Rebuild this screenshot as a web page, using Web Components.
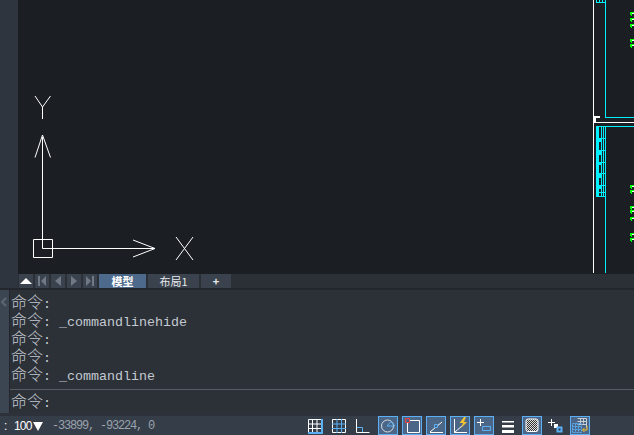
<!DOCTYPE html>
<html lang="zh">
<head>
<meta charset="utf-8">
<title>CAD</title>
<style>
    html, body { margin: 0; height: 100%; overflow: hidden; background: #2c3037; }
    body { display: grid; grid-template-rows: 274px 16px 123px 22px; height: 435px; width: 634px; }
</style>
</head>
<body>
<cad-viewport></cad-viewport>
<cad-tabs>
    <cad-tab nav><svg width="14" height="14" viewBox="0 0 14 14"><path d="M1 10 7 4l6 6z" fill="#fff"/></svg></cad-tab>
    <cad-tab nav><svg width="14" height="14" viewBox="0 0 14 14"><path d="M3 2h2v10H3zM11 2v10L6 7z" fill="#6f7884"/></svg></cad-tab>
    <cad-tab nav><svg width="14" height="14" viewBox="0 0 14 14"><path d="M10 2v10L4 7z" fill="#6f7884"/></svg></cad-tab>
    <cad-tab nav><svg width="14" height="14" viewBox="0 0 14 14"><path d="M4 2v10l6-5z" fill="#6f7884"/></svg></cad-tab>
    <cad-tab nav><svg width="14" height="14" viewBox="0 0 14 14"><path d="M3 2v10l5-5zM9 2h2v10H9z" fill="#6f7884"/></svg></cad-tab>
    <cad-tab active style="width:47px"><b>模型</b></cad-tab>
    <cad-tab style="width:51px">布局1</cad-tab>
    <cad-tab style="width:30px"><b>+</b></cad-tab>
</cad-tabs>
<cad-command>
    <cad-line></cad-line>
    <cad-line>_commandlinehide</cad-line>
    <cad-line></cad-line>
    <cad-line></cad-line>
    <cad-line>_commandline</cad-line>
    <cad-line slot="prompt"></cad-line>
</cad-command>
<cad-status>
    <span slot="zoom"><span style="width:9px">:</span>100<svg width="10" height="9" viewBox="0 0 10 9"><path d="M0 0h10L5 9z" fill="#fff"/></svg></span>
    <span slot="coords">-33899, -93224, 0</span>
    <cad-tool><svg width="20" height="19" viewBox="0 0 20 19"><path d="M2.500 3.500h13v13h-13zM6.500 3.500v13M11 3.500v13M2.500 8h13M2.500 12.500h13" fill="none" stroke="#fff"/><path d="M15 3h2v15H2v-2h13z" fill="#5bb0f5"/></svg></cad-tool>
    <cad-tool><svg width="20" height="19" viewBox="0 0 20 19"><path d="M2.500 3.500h13v13h-13z" fill="none" stroke="#fff"/><path d="M7 3v14M11.500 3v14M2 8h14M2 12.500h14" stroke="#5bb0f5"/></svg></cad-tool>
    <cad-tool><svg width="20" height="19" viewBox="0 0 20 19"><path d="M2.500 3v13.500h13" fill="none" stroke="#fff"/><path d="M3 11.500h5.500V16" fill="none" stroke="#5bb0f5"/></svg></cad-tool>
    <cad-tool on><svg width="18" height="17" viewBox="0 0 18 17"><circle cx="8.500" cy="9" r="6" fill="none" stroke="#d8dde2"/><path d="M8 9h8L12 4.500z" fill="none" stroke="#5bb0f5"/></svg></cad-tool>
    <cad-tool on><svg width="18" height="17" viewBox="0 0 18 17"><path d="M4.500 3.500h12v12h-12z" fill="none" stroke="#fff"/><path d="M2.500 1.500h4v4h-4z" fill="#4b6686" stroke="#f04040"/></svg></cad-tool>
    <cad-tool on><svg width="18" height="17" viewBox="0 0 18 17"><path d="M3 15 15 5M3 15.500h13" fill="none" stroke="#fff"/><path d="M7.500 7.500h3v3h-3z" fill="#4b6686" stroke="#5bb0f5"/></svg></cad-tool>
    <cad-tool on><svg width="18" height="17" viewBox="0 0 18 17"><path d="M3.500 2v13.500H16M3.500 15.500 12 8" fill="none" stroke="#fff"/><path d="M13 0 8.500 6H12l-2 5 6-6h-3l2-5z" fill="#f1c232"/></svg></cad-tool>
    <cad-tool on><svg width="18" height="17" viewBox="0 0 18 17"><path d="M2 5.500h7M5.500 2v7" stroke="#fff" fill="none"/><path d="M7.500 9.500h8v4h-8z" fill="none" stroke="#5bb0f5"/></svg></cad-tool>
    <cad-tool><svg width="20" height="19" viewBox="0 0 20 19"><path d="M4 5h12v1.500H4zM4 9h12v2.500H4zM4 14h12v3H4z" fill="#fff"/></svg></cad-tool>
    <cad-tool on><svg width="18" height="17" viewBox="0 0 18 17"><defs><pattern id="chk" width="2" height="2" patternUnits="userSpaceOnUse"><rect width="2" height="2" fill="#333"/><rect width="1" height="1" fill="#ddd"/><rect x="1" y="1" width="1" height="1" fill="#ddd"/></pattern></defs><rect x="3" y="2" width="12" height="12.500" rx="2" fill="url(#chk)" stroke="#fff"/></svg></cad-tool>
    <cad-tool><svg width="20" height="19" viewBox="0 0 20 19"><path d="M2 6.500h7M5.500 3v7" stroke="#fff" fill="none"/><path d="M8 8h4v4H8z" fill="#fff"/><path d="M11.500 11.500h4v4h-4z" fill="#2f3640" stroke="#5bb0f5" stroke-width="2"/></svg></cad-tool>
    <cad-tool on><svg width="18" height="17" viewBox="0 0 18 17"><path d="M6.500 1.500h9v9M9.500 1.500v5M12.500 1.500v5M6.500 4.500h9M6.500 7.500h9" fill="none" stroke="#c9ced4"/><path d="M1.500 6.500h9v9h-9zM4.500 6.500v9M7.500 6.500v9M1.500 9.500h9M1.500 12.500h9" fill="none" stroke="#5bb0f5" stroke-dasharray="2 1"/><path d="M16 9v4h-4M13.500 11l-2 2 2 2" fill="none" stroke="#f1c232"/></svg></cad-tool>
</cad-status>
<script>
    // model space picture, coordinates are page pixels (viewBox starts after the left strip)
    const greenRows = [12, 18, 24, 39, 44, 185, 190, 206, 210, 217, 233, 238];
    const greenMarks = greenRows.map((y) =>
        `<rect x="630" y="${y}" width="4" height="1" fill="#00ff00"/><rect x="630" y="${y + 1}" width="2" height="2" fill="#00ff00"/><rect x="632" y="${y + 1}" width="2" height="1" fill="#fff"/><rect x="631" y="${y + 3}" width="1" height="1" fill="#00ff00"/>`
    ).join("");
    const rungs = [126, 138, 150, 162, 173, 185, 192, 196].map((y) => `M596 ${y + .5}h10`).join("");

    const viewportTemplate = document.createElement("template");
    viewportTemplate.innerHTML = `
<style>
    :host { display: block; background: #2f353f; padding-left: 18px; }
    svg { display: block; width: 616px; height: 274px; background: #1b1f24; }
</style>
<svg viewBox="18 0 616 274" fill="none">
    <g stroke="#fff">
        <path d="M33.500 239.500h19v18h-19zM42.500 137v111.500H155M35 157.500 42.500 135 50.500 157.500M133 240l22 8.500-22 8.500"/>
        <path d="M35 96l7.500 11L50.500 96M42.500 107v12M176 237l17 23M193 237l-17 23"/>
        <path d="M593.500 0v273M593 122.500h41" shape-rendering="crispEdges"/>
        <path d="M594 116.500h6M594 118.500h2M594 120.500h2" stroke-width="2" shape-rendering="crispEdges"/>
    </g>
    <g stroke="#00f0ff" shape-rendering="crispEdges">
        <path d="M605.500 0v117.500H634M596 126.500h38M605.500 126v147M601.500 126v71M603.500 126v71${rungs}"/>
        <path d="M596.500 0v3M599.500 0v3M602.500 0v3M596 2.500h10"/>
        <path d="M597.500 126v71M599 138v4M599 150v5M600 162v3M599 173v5M599 185v4" stroke-width="3"/>
    </g>
    <g shape-rendering="crispEdges">${greenMarks}</g>
</svg>`;

    class CadViewport extends HTMLElement {
        constructor() {
            super();
            this.attachShadow({ mode: "open" }).append(viewportTemplate.content.cloneNode(true));
        }
    }
    customElements.define("cad-viewport", CadViewport);

    const tabsTemplate = document.createElement("template");
    tabsTemplate.innerHTML = `
<style>
    :host {
        display: flex; gap: 2px; padding-left: 19px; height: 14px;
        background: linear-gradient(90deg, #2f353f 18px, #2b3037 18px);
        border-bottom: 2px solid #23272d;
    }
</style>
<slot></slot>`;

    class CadTabs extends HTMLElement {
        constructor() {
            super();
            this.attachShadow({ mode: "open" }).append(tabsTemplate.content.cloneNode(true));
        }
    }
    customElements.define("cad-tabs", CadTabs);

    const tabTemplate = document.createElement("template");
    tabTemplate.innerHTML = `
<style>
    :host {
        display: flex; align-items: center; justify-content: center;
        width: 14px; height: 14px;
        background: #3a424d; color: #e6e9ec;
        font: 11px/14px "Noto Sans CJK SC", "Liberation Sans", sans-serif;
    }
    :host([active]) { background: #4d6a8c; color: #fff; }
    ::slotted(b) { font-weight: 700; }
</style>
<slot></slot>`;

    class CadTab extends HTMLElement {
        constructor() {
            super();
            this.attachShadow({ mode: "open" }).append(tabTemplate.content.cloneNode(true));
        }
    }
    customElements.define("cad-tab", CadTab);

    const commandTemplate = document.createElement("template");
    commandTemplate.innerHTML = `
<style>
    :host { display: grid; grid-template-columns: 10px 1fr; background: #2c3037; }
    #grip { background: #3c4653; border-right: 1px solid #23272d; }
    #grip svg { display: block; margin-top: 7px; }
    #body { display: flex; flex-direction: column; }
    #history { height: 99px; box-sizing: border-box; padding-top: 2px; }
    #prompt { border-top: 1px solid #565c63; padding-top: 1px; }
</style>
<div id="grip"><svg width="10" height="10" viewBox="0 0 10 10"><path d="M6 1 2 5l4 4" fill="none" stroke="#5d6672" stroke-width="2"/></svg></div>
<div id="body">
    <div id="history"><slot></slot></div>
    <div id="prompt"><slot name="prompt"></slot></div>
</div>`;

    class CadCommand extends HTMLElement {
        constructor() {
            super();
            this.attachShadow({ mode: "open" }).append(commandTemplate.content.cloneNode(true));
        }
    }
    customElements.define("cad-command", CadCommand);

    const lineTemplate = document.createElement("template");
    lineTemplate.innerHTML = `
<style>
    :host {
        display: flex; align-items: baseline; height: 18px; line-height: 18px; padding-left: 1px;
        color: #c3cad2; font: 13.330px/18px "Liberation Mono", monospace; white-space: pre;
    }
    #cmd { font: 16px/18px "Noto Sans CJK SC", sans-serif; font-weight: 300; }
</style>
<span id="cmd">命令</span><span>: </span><slot></slot>`;

    class CadLine extends HTMLElement {
        constructor() {
            super();
            this.attachShadow({ mode: "open" }).append(lineTemplate.content.cloneNode(true));
        }
    }
    customElements.define("cad-line", CadLine);

    const statusTemplate = document.createElement("template");
    statusTemplate.innerHTML = `
<style>
    :host {
        display: flex; align-items: flex-end; height: 22px;
        background: linear-gradient(#2d323a 0, #2d323a 3px, #353d49 3px);
    }
    #left { display: flex; align-items: center; width: 306px; height: 19px; padding: 2px 0 0 4px; box-sizing: border-box; }
    ::slotted([slot="zoom"]) {
        display: flex; align-items: center; gap: 1px; width: 48px;
        color: #fff; font: 12px/17px "Liberation Sans", sans-serif; letter-spacing: -.8px;
    }
    ::slotted([slot="coords"]) { color: #9aa3ad; font: 12px/17px "Liberation Mono", monospace; letter-spacing: -1.2px; white-space: pre; }
    #tools { display: flex; gap: 4px; }
</style>
<div id="left"><slot name="zoom"></slot><slot name="coords"></slot></div>
<div id="tools"><slot></slot></div>`;

    class CadStatus extends HTMLElement {
        constructor() {
            super();
            this.attachShadow({ mode: "open" }).append(statusTemplate.content.cloneNode(true));
        }
    }
    customElements.define("cad-status", CadStatus);

    const toolTemplate = document.createElement("template");
    toolTemplate.innerHTML = `
<style>
    :host { display: block; width: 20px; height: 19px; box-sizing: border-box; }
    :host([on]) { border: 1px solid #5bb0f5; background: #4b6686; }
    ::slotted(svg) { display: block; }
</style>
<slot></slot>`;

    class CadTool extends HTMLElement {
        constructor() {
            super();
            this.attachShadow({ mode: "open" }).append(toolTemplate.content.cloneNode(true));
        }
    }
    customElements.define("cad-tool", CadTool);
</script>
</body>
</html>
